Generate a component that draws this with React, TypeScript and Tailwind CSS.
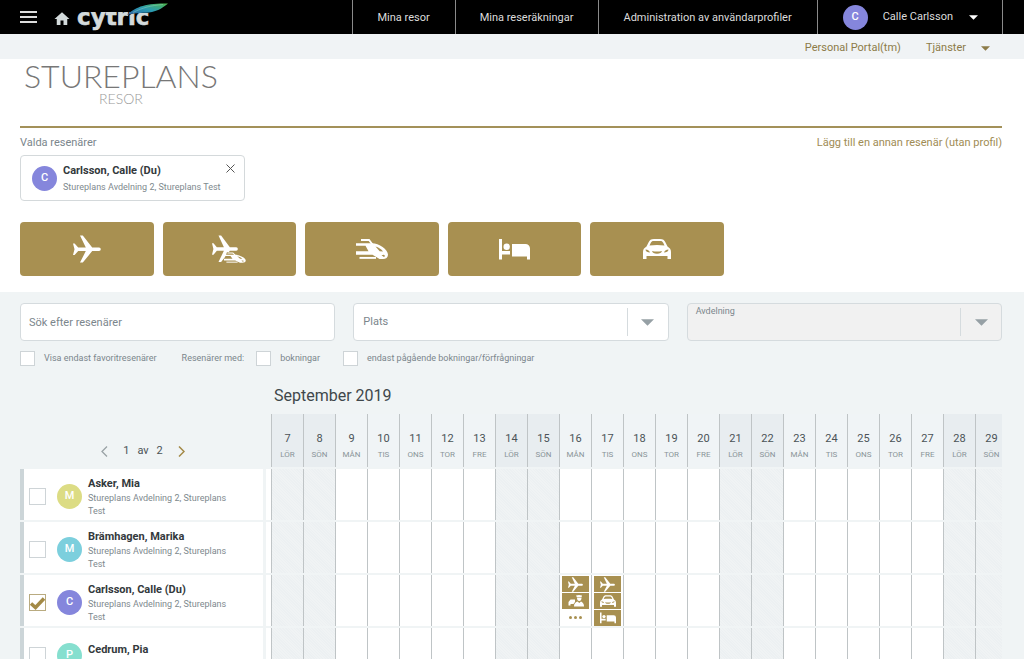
import React, { useState } from 'react';
import { MdHome } from 'react-icons/md';

type Service = 'flight' | 'flightTrain' | 'train' | 'hotel' | 'car' | 'taxi';

interface Traveller {
    name: string;
    unit: string;
    color: string;
    trips?: Record<number, Service[]>;
}

const travellers: Traveller[] = [
    { name: 'Asker, Mia', unit: 'Stureplans Avdelning 2, Stureplans Test', color: 'bg-[#dcdc84]' },
    { name: 'Brämhagen, Marika', unit: 'Stureplans Avdelning 2, Stureplans Test', color: 'bg-[#7ccfdd]' },
    {
        name: 'Carlsson, Calle (Du)',
        unit: 'Stureplans Avdelning 2, Stureplans Test',
        color: 'bg-[#8586dc]',
        trips: { 16: ['flight', 'taxi'], 17: ['flight', 'car', 'hotel'] },
    },
    { name: 'Cedrum, Pia', unit: 'Stureplans Test', color: 'bg-[#86dfcf]' },
];

const weekdays = ['SÖN', 'MÅN', 'TIS', 'ONS', 'TOR', 'FRE', 'LÖR'];

// 1 september 2019 är en söndag
const days = Array.from({ length: 23 }, (_, i) => {
    const date = i + 7;
    const weekday = (date - 1) % 7;
    return { date, label: weekdays[weekday], weekend: weekday === 0 || weekday === 6 };
});

const PlaneShape = () => (
    <path d="M0 8.5h1.6l3.6 4h7.6L7 .4h2.8l9.4 12.1H26a1.8 1.8 0 0 1 0 3.6h-6.8L9.8 27.6H7l5.8-11.5H5.2l-3.6 4H0l1.5-5.8z" />
);

const TrainShape = () => (
    <>
        <path d="M5 1h8l3.500 4.500" fill="none" stroke="currentColor" strokeWidth="1.8" />
        <path
            fillRule="evenodd"
            d="M0 4.300h16c7 0 16 6.200 16 11.400 0 2.800-2.200 4.300-5 4.300h-3.500L16.500 15.800H0v-3.600h12.500L9.500 6.800H0zM19.500 7.500l4.200 4.700 3.300.2c-1.600-2.200-4.500-4.200-7.500-4.900zM25.500 16.200l2.400 1.700 1.300-1-1.400-1.100z"
        />
        <path d="M3.500 18.900H20" fill="none" stroke="currentColor" strokeWidth="1.9" />
    </>
);

const ServiceIcon = ({ type, className }: { type: Service; className: string }) => {
    const props = { className, fill: 'currentColor', 'aria-hidden': true };
    switch (type) {
        case 'flight':
            return <svg viewBox="0 0 28 28" {...props}><PlaneShape /></svg>;
        case 'flightTrain':
            return (
                <svg viewBox="0 0 34 28" {...props}>
                    <g transform="scale(.93 .98)"><PlaneShape /></g>
                    <g className="text-[#a89051]" transform="translate(11 16)"><path d="M4 1h12l8 7v5H0z" fill="currentColor" /></g>
                    <g transform="translate(12 17.500) scale(.68 .51)"><TrainShape /></g>
                </svg>
            );
        case 'train':
            return <svg viewBox="0 0 32 21" {...props}><TrainShape /></svg>;
        case 'hotel':
            return (
                <svg viewBox="0 0 31 21" {...props}>
                    <path d="M0 0h3v12h8v3.500H3V20.500H0zM13 5h13.500a4.500 4.500 0 0 1 4.500 4.500v11h-3V17.500H13z" />
                    <circle cx="7.700" cy="7.800" r="3.200" />
                </svg>
            );
        case 'car':
            return (
                <svg viewBox="0 0 28 20" {...props}>
                    <path
                        fillRule="evenodd"
                        d="M5.500 3.500C6.600 1 8 0 11 0h6c3 0 4.400 1 5.500 3.500l2 4c2.400 1.600 3.500 2.900 3.500 5.500v7h-3.500v-3h-21v3H0v-7c0-2.600 1.100-3.900 3.500-5.500zM6.500 6.500c5-.8 10-.8 15 0l-1.300-2.800C19.500 2.400 18.500 2 17 2h-6c-1.500 0-2.500.4-3.200 1.700zM2.500 10.500c0 2 2 3 4.500 3-.3-1.600-2-2.700-4.500-3zM25.500 10.500c0 2-2 3-4.500 3 .3-1.600 2-2.700 4.500-3zM9 12c.7 2 2 2.700 5 2.700s4.300-.7 5-2.700c-3.300.7-6.700.7-10 0z"
                    />
                </svg>
            );
        case 'taxi':
            return (
                <svg viewBox="0 0 32 24" {...props}>
                    <path d="M1 14l4-5h9v5l-3 4H5v3H1zM16 1l6-1 6 1-1 4h-9zM18 6h9c0 4-2 6-4.500 6S18 10 18 6zM12 22c0-5 4-8 7-9l3.500 3 3.500-3c2 1 6 4 6 9v1H12z" />
                </svg>
            );
    }
};

const Caret = ({ className }: { className: string }) => (
    <svg viewBox="0 0 10 5" className={className} fill="currentColor" aria-hidden="true">
        <path d="M0 0h10L5 5z" />
    </svg>
);

const Avatar = ({ letter, color }: { letter: string; color: string }) => (
    <span className={`flex h-[25px] w-[25px] shrink-0 items-center justify-center rounded-full pt-px text-[11px] font-medium text-white ${color}`}>
        {letter}
    </span>
);

const Logo = () => (
    <svg viewBox="0 0 92 32" className="h-8 w-[92px]" role="img" aria-label="cytric">
        <defs>
            <linearGradient id="wing" x1="0" y1="1" x2="1" y2="0">
                <stop offset="0" stopColor="#2d5fa5" />
                <stop offset=".5" stopColor="#2b9cb0" />
                <stop offset="1" stopColor="#4fb648" />
            </linearGradient>
        </defs>
        <text x="0" y="24" fill="#d3dadb" stroke="#d3dadb" strokeWidth=".6" fontFamily="DejaVu Sans" fontWeight="bold" fontSize="23">cytric</text>
        {/* the wing replaces the ascender and the dot */}
        <path d="M0 0h92v11H0z" fill="#000" />
        <path d="M51 15C57 6 68 1 92 2c-5 4-9 8-17 10h-16c-3 0-5 1-8 3z" fill="#000" />
        <path d="M50 14C58 6.500 67 2 91 2.500c-5 4-9 7-16 8.500-8 1.500-15 0-25 3z" fill="url(#wing)" />
        <path d="M56 11.500C66 6.500 74 4.500 86 3.500" fill="none" stroke="#a7dccb" strokeWidth=".4" />
    </svg>
);

const Header = () => (
    <header className="flex h-[34px] items-stretch bg-black pr-[21px] text-[11px] text-[#dcdcdc]">
        <div className="flex flex-1 items-center pl-5">
            <button type="button" aria-label="Meny" className="flex w-[17px] flex-col gap-[3px]">
                <span className="h-[2px] bg-[#dcdcdc]" />
                <span className="h-[2px] bg-[#dcdcdc]" />
                <span className="h-[2px] bg-[#dcdcdc]" />
            </button>
            <a href="#" aria-label="Hem" className="ml-4 mt-1">
                <MdHome className="h-[18px] w-[18px] text-[#d3dadb]" />
            </a>
            <a href="#" className="ml-[6px]">
                <Logo />
            </a>
        </div>
        <nav className="flex">
            {['Mina resor', 'Mina reseräkningar', 'Administration av användarprofiler'].map((item) => (
                <a key={item} href="#" className="flex items-center border-l border-[#8a8a8a] px-6 pt-[2px] pr-[25px]">
                    {item}
                </a>
            ))}
        </nav>
        <button type="button" className="flex items-center border-x border-[#8a8a8a] pr-6 pl-[25px]">
            <Avatar letter="C" color="bg-[#8586dc]" />
            <span className="ml-[15px] pt-px">Calle Carlsson</span>
            <Caret className="ml-4 h-[5px] w-[9px] text-white" />
        </button>
    </header>
);

interface TickBoxProps {
    label?: string;
    title?: string;
    large?: boolean;
    initial?: boolean;
}

const TickBox = ({ label, title, large, initial = false }: TickBoxProps) => {
    const [checked, setChecked] = useState(initial);
    const size = large ? 'h-[17px] w-[17px]' : 'h-[15px] w-[15px]';

    return (
        <label className="flex items-center gap-[9px]">
            <span className="grid">
                <input
                    type="checkbox"
                    aria-label={title}
                    checked={checked}
                    onChange={(e) => setChecked(e.target.checked)}
                    className={`col-start-1 row-start-1 appearance-none border bg-white ${checked ? 'border-[#b9ab80]' : 'border-[#ced4d7]'} ${size}`}
                />
                {checked && (
                    <svg viewBox="0 0 17 17" className={`pointer-events-none col-start-1 row-start-1 ${size}`} aria-hidden="true">
                        <path d="M2 9.500l4.500 4L15 4.500" fill="none" stroke="#a38a47" strokeWidth="3.500" />
                    </svg>
                )}
            </span>
            {label}
        </label>
    );
};

const SelectedTraveller = () => (
    <div className="mt-1 flex h-[46px] w-[225px] rounded-sm border border-[#d4d9db] pl-[11px] pr-[9px]">
        <div className="flex flex-1 items-center gap-[6px]">
            <Avatar letter="C" color="bg-[#8586dc]" />
            <div className="pt-[2px]">
                <p className="text-[11px] leading-4 font-bold text-[#33393c]">Carlsson, Calle (Du)</p>
                <p className="text-[9px] leading-4 whitespace-nowrap text-[#7e898e]">Stureplans Avdelning 2, Stureplans Test</p>
            </div>
        </div>
        <button type="button" aria-label="Ta bort" className="mt-2 h-[9px] w-[9px]">
            <svg viewBox="0 0 9 9" className="h-[9px] w-[9px]" stroke="#555" strokeWidth="1">
                <path d="M.5.500l8 8M8.500.500l-8 8" />
            </svg>
        </button>
    </div>
);

const services: { type: Service; label: string; size: string }[] = [
    { type: 'flight', label: 'Flyg', size: 'h-7 w-7' },
    { type: 'flightTrain', label: 'Flyg och tåg', size: 'h-7 w-[34px]' },
    { type: 'train', label: 'Tåg', size: 'h-[21px] w-8' },
    { type: 'hotel', label: 'Hotell', size: 'h-[21px] w-[31px]' },
    { type: 'car', label: 'Hyrbil', size: 'h-5 w-7' },
];

const Filters = () => (
    <form>
        <div className="grid grid-cols-3 gap-[18px] text-[11px] text-[#7b868c]">
            <input
                type="text"
                aria-label="Sök efter resenärer"
                placeholder="Sök efter resenärer"
                className="h-[38px] min-w-0 rounded-sm border border-[#d5dbde] bg-white px-2 placeholder:text-[#7b868c]"
            />
            <div className="grid h-[38px] rounded-sm border border-[#d5dbde] bg-white">
                <select aria-label="Plats" className="col-start-1 row-start-1 appearance-none bg-transparent px-[9px]">
                    <option>Plats</option>
                </select>
                <span className="pointer-events-none col-start-1 row-start-1 my-1 flex w-[41px] items-center justify-center justify-self-end border-l border-[#d5dbde]">
                    <Caret className="h-[7px] w-[13px] text-[#96a0a5]" />
                </span>
            </div>
            <div className="grid h-[38px] rounded-sm border border-[#d5dbde] bg-[#f1f1f1]">
                <label htmlFor="department" className="col-start-1 row-start-1 px-2 text-[9px] leading-[14px]">Avdelning</label>
                <select id="department" disabled className="col-start-1 row-start-1 appearance-none bg-transparent" />
                <span className="pointer-events-none col-start-1 row-start-1 my-1 flex w-[41px] items-center justify-center justify-self-end border-l border-[#d5dbde]">
                    <Caret className="h-[7px] w-[13px] text-[#96a0a5]" />
                </span>
            </div>
        </div>
        <div className="mt-[10px] flex items-center text-[9px] text-[#7b868c]">
            <TickBox label="Visa endast favoritresenärer" />
            <span className="mr-3 ml-[25px]">Resenärer med:</span>
            <TickBox label="bokningar" />
            <span className="w-[23px]" />
            <TickBox label="endast pågående bokningar/förfrågningar" />
        </div>
    </form>
);

const TripCell = ({ trips }: { trips: Service[] }) => (
    <div className="flex h-[51px] flex-col gap-px px-[2px] pt-px">
        {trips.map((trip) => (
            <span key={trip} className="flex h-4 items-center justify-center bg-[#a89051] text-white">
                <ServiceIcon type={trip} className={trip === 'flight' ? 'h-[15px] w-[15px]' : 'h-3 w-4'} />
            </span>
        ))}
        {trips.length < 3 && (
            <button type="button" aria-label="Visa fler" className="flex h-[14px] items-center justify-center gap-[2px]">
                <span className="h-[3px] w-[3px] rounded-full bg-[#a89051]" />
                <span className="h-[3px] w-[3px] rounded-full bg-[#a89051]" />
                <span className="h-[3px] w-[3px] rounded-full bg-[#a89051]" />
            </button>
        )}
    </div>
);

const Pager = () => (
    <div className="flex items-center justify-center pb-2 pr-[5px] text-[11px] leading-4 font-normal text-[#4b5357]">
        <button type="button" aria-label="Föregående sida">
            <svg viewBox="0 0 7 11" className="h-[11px] w-[7px]" fill="none" stroke="#9aa2a6" strokeWidth="1.300">
                <path d="M6 .500l-5 5 5 5" />
            </svg>
        </button>
        <span className="mx-[15px] flex gap-2">
            <span>1</span>
            <span>av</span>
            <span>2</span>
        </span>
        <button type="button" aria-label="Nästa sida">
            <svg viewBox="0 0 7 11" className="h-[11px] w-[7px]" fill="none" stroke="#a38a47" strokeWidth="1.500">
                <path d="M1 .500l5 5-5 5" />
            </svg>
        </button>
    </div>
);

const Calendar = () => (
    <section className="mt-[21px] overflow-hidden">
        <h2 className="pl-[254px] text-base leading-[18px] text-[#3f474b]">September 2019</h2>
        <table className="mt-[7px] w-[987px] table-fixed border-separate border-spacing-x-0 border-spacing-y-[2px]">
            <thead>
                <tr>
                    <th className="h-[53px] w-[251px] p-0 align-bottom">
                        <Pager />
                    </th>
                    {days.map((day) => (
                        <th
                            key={day.date}
                            className={`h-[53px] border-l border-[#bfc4c6] p-0 pt-3 font-normal ${day.weekend ? 'bg-[#e8edf0]' : 'bg-[#f0f4f6]'}`}
                        >
                            <span className="block text-[11px] leading-4 text-[#4b5357]">{day.date}</span>
                            <span className="block text-[8px] leading-4 text-[#8a9499]">{day.label}</span>
                        </th>
                    ))}
                </tr>
            </thead>
            <tbody>
                {travellers.map((traveller) => (
                    <tr key={traveller.name}>
                        <th className="h-[51px] border-l-4 border-[#ccd5d8] bg-white p-0 text-left">
                            <div className="flex h-[51px]">
                                <div className="flex flex-1 items-center pt-[3px] pl-[5px]">
                                    <TickBox title={traveller.name} large initial={traveller.name.startsWith('Carlsson')} />
                                    <span className="mr-[6px] ml-[11px]">
                                        <Avatar letter={traveller.name.split(', ')[1][0]} color={traveller.color} />
                                    </span>
                                    <div className="w-[150px] pt-[2px]">
                                        <p className="text-[11px] leading-4 font-bold text-[#33393c]">{traveller.name}</p>
                                        <p className="text-[9px] leading-[13px] font-normal text-[#7e898e]">{traveller.unit}</p>
                                    </div>
                                </div>
                                <span className="mr-[5px] w-[3px] bg-[#f0f4f5]" />
                            </div>
                        </th>
                        {days.map((day) => (
                            <td
                                key={day.date}
                                className={`h-[51px] border-l border-[#bfc4c6] p-0 align-top ${
                                    day.weekend
                                        ? 'bg-[repeating-linear-gradient(45deg,#f0f3f4_0px,#f0f3f4_1px,#ecf0f2_1px,#ecf0f2_2px)]'
                                        : 'bg-white'
                                }`}
                            >
                                {traveller.trips?.[day.date] && <TripCell trips={traveller.trips[day.date]} />}
                            </td>
                        ))}
                    </tr>
                ))}
            </tbody>
        </table>
    </section>
);

const App: React.FC = () => {
    return (
        <div className="h-screen overflow-hidden bg-white font-['Roboto',sans-serif]">
            <Header />
            <div className="flex h-[25px] items-center justify-end bg-[#f0f3f5] pt-[3px] pr-[34px] text-[11px] text-[#8c7b48]">
                <a href="#">Personal Portal(tm)</a>
                <button type="button" className="ml-[25px] flex items-center gap-[15px]">
                    Tjänster
                    <Caret className="h-[5px] w-[9px]" />
                </button>
            </div>

            <main>
                <div className="px-5 pr-[22px]">
                    <div className="flex h-[69px] border-b-2 border-[#a39159] pl-1 font-['Lato',sans-serif]">
                        <div className="text-center">
                            <p className="text-[32px] leading-[34px] font-light text-[#777]">STUREPLANS</p>
                            <p className="text-[14px] leading-3 font-light text-[#999]">RESOR</p>
                        </div>
                    </div>

                    <div className="mt-2 flex h-[15px] items-center justify-between text-[11px] text-[#7b868c]">
                        <h2>Valda resenärer</h2>
                        <a href="#" className="text-[#a08c54]">Lägg till en annan resenär (utan profil)</a>
                    </div>
                    <SelectedTraveller />

                    <div className="mt-[21px] grid max-w-[704px] grid-cols-5 gap-[9px]">
                        {services.map((service) => (
                            <button
                                key={service.type}
                                type="button"
                                aria-label={service.label}
                                className="flex h-[54px] items-center justify-center rounded-sm bg-[#a89051] text-white"
                            >
                                <ServiceIcon type={service.type} className={service.size} />
                            </button>
                        ))}
                    </div>
                </div>

                <div className="mt-4 min-h-screen bg-[#f0f4f5] py-[11px] pr-[22px] pl-5">
                    <Filters />
                    <Calendar />
                </div>
            </main>
        </div>
    );
};

export default App;
